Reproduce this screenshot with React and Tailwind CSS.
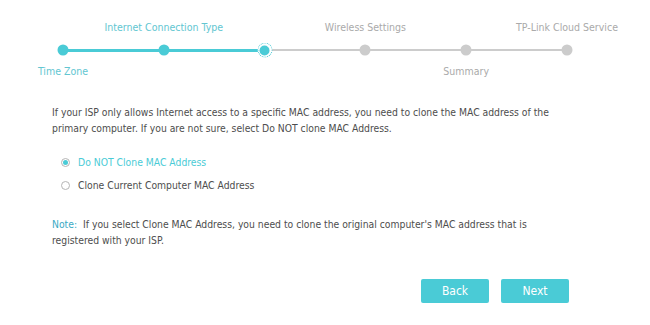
import React from "react";

const font = { fontFamily: '"DejaVu Sans Condensed", "DejaVu Sans", Tahoma, sans-serif' };

function Dot({ active }) {
  return (
    <div className={`w-[11px] h-[11px] rounded-full ${active ? "bg-[#4acbd6]" : "bg-[#cccccc]"}`} />
  );
}

export default function App() {
  const steps = [
    { top: null, bottom: "Time Zone", state: "done" },
    { top: "Internet Connection Type", bottom: null, state: "done" },
    { top: null, bottom: null, state: "current" },
    { top: "Wireless Settings", bottom: null, state: "todo" },
    { top: null, bottom: "Summary", state: "todo" },
    { top: "TP-Link Cloud Service", bottom: null, state: "todo" },
  ];
  return (
    <div className="w-[650px] h-[325px] bg-white text-[10.3px] text-[#4d4d4d]" style={font}>
      {/* stepper */}
      <div className="relative h-[90px]">
        <div className="absolute left-[63px] top-[49px] w-[202px] h-[3px] bg-[#4acbd6]" />
        <div className="absolute left-[265px] top-[49px] w-[302px] h-[2px] bg-[#cccccc]" />
        {steps.map((s, i) => {
          const x = 63 + i * 100.8;
          return (
            <React.Fragment key={i}>
              <div className="absolute top-[50px] -translate-x-1/2 -translate-y-1/2" style={{ left: x }}>
                {s.state === "current" ? (
                  <div className="w-[15px] h-[15px] rounded-full border border-dotted border-[#4acbd6] flex items-center justify-center bg-white">
                    <div className="w-[10px] h-[10px] rounded-full bg-[#4acbd6]" />
                  </div>
                ) : (
                  <Dot active={s.state === "done"} />
                )}
              </div>
              {s.top && (
                <div
                  className={`absolute top-[20px] leading-[14px] -translate-x-1/2 whitespace-nowrap text-[10.5px] ${s.state === "done" ? "text-[#62c6d1]" : "text-[#aaaaaa]"}`}
                  style={{ left: x }}
                >
                  {s.top}
                </div>
              )}
              {s.bottom && (
                <div
                  className={`absolute top-[64px] leading-[14px] -translate-x-1/2 whitespace-nowrap text-[10.5px] ${s.state === "done" ? "text-[#62c6d1]" : "text-[#aaaaaa]"}`}
                  style={{ left: x }}
                >
                  {s.bottom}
                </div>
              )}
            </React.Fragment>
          );
        })}
      </div>
      <div className="pl-[52px] pt-[14px] leading-[16px]">
        <p className="w-[520px]">
          If your ISP only allows Internet access to a specific MAC address, you need to clone the MAC address of the
          primary computer. If you are not sure, select Do NOT clone MAC Address.
        </p>
        <div className="mt-[18px] pl-[9px] flex flex-col gap-[7px]">
          <div className="flex items-center gap-[8px] text-[#4acbd6]">
            <span className="w-[9px] h-[9px] rounded-full border border-[#b5b5b5] flex items-center justify-center">
              <span className="w-[5px] h-[5px] rounded-full bg-[#4acbd6]" />
            </span>
            Do NOT Clone MAC Address
          </div>
          <div className="flex items-center gap-[8px]">
            <span className="w-[9px] h-[9px] rounded-full border border-[#b5b5b5]" />
            Clone Current Computer MAC Address
          </div>
        </div>
        <p className="mt-[23px] w-[520px]">
          <span className="text-[#3aa9c4] mr-[3px]">Note:</span>
          <span> If you select Clone MAC Address, you need to clone the original computer's MAC address that is registered with your ISP.</span>
        </p>
        <div className="mt-[31px] flex gap-[12px] pl-[369px]">
          <button className="w-[68px] h-[24px] rounded-[2px] bg-[#4acbd6] text-white text-[12px]">Back</button>
          <button className="w-[68px] h-[24px] rounded-[2px] bg-[#4acbd6] text-white text-[12px]">Next</button>
        </div>
      </div>
    </div>
  );
}
